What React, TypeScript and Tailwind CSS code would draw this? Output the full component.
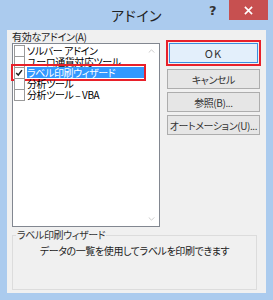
import React from "react";

const jp = "font-['Meiryo_UI','Noto_Sans_CJK_JP',sans-serif] [font-feature-settings:'palt']";

const items = [
  { label: "ソルバー アドイン", checked: false },
  { label: "ユーロ通貨対応ツール", checked: false },
  { label: "ラベル印刷ウィザード", checked: true, selected: true },
  { label: "分析ツール", checked: false },
  { label: "分析ツール – VBA", checked: false },
];

function Check({ on }: { on: boolean }) {
  return (
    <div className="relative w-[11px] h-[12px] shrink-0 border border-[#9a9a9a] bg-white">
      {on && (
        <svg viewBox="0 0 11 12" className="absolute inset-0 w-[9px] h-[10px]">
          <path d="M1.5 6 L4 8.5 L8.5 2.5" fill="none" stroke="#222" strokeWidth="1.8" />
        </svg>
      )}
    </div>
  );
}

function Button({ label, primary }: { label: string; primary?: boolean }) {
  return (
    <div
      className={
        "h-[20px] flex items-center justify-center whitespace-nowrap text-[10px] tracking-[-0.4px] text-[#333] border " +
        (primary
          ? "border-[#3c8ee0] bg-[#e3effb] text-[11px] tracking-[1px]"
          : "border-[#adadad] bg-[#e6e6e6]")
      }
    >
      {label}
    </div>
  );
}

export default function App() {
  return (
    <div className={"w-[273px] h-[300px] bg-[#abcbee] overflow-hidden text-black " + jp}>
      {/* title bar */}
      <div className="relative h-[30px] flex items-center justify-center">
        <span className="text-[14px] text-[#222] tracking-[0.5px]">アドイン</span>
        <span className="absolute left-[209px] top-[1px] text-[13px] font-bold text-[#333] font-['DejaVu_Sans',sans-serif]">?</span>
        <div className="absolute left-[229px] top-0 w-[39px] h-[20px] bg-[#c75050] flex items-center justify-center">
          <svg viewBox="0 0 10 10" className="w-[9px] h-[9px]">
            <path d="M1 1 L9 9 M9 1 L1 9" stroke="#fff" strokeWidth="1.8" />
          </svg>
        </div>
      </div>

      {/* client area */}
      <div className="mx-[7px] h-[263px] bg-[#f0f0f0] px-[5px] pt-[2px]">
        <div className="flex gap-[6px]">
          <div className="w-[149px]">
            <div className="h-[10px] text-[10px] leading-[10px] tracking-[-0.3px] text-[#222]">有効なアドイン(A)</div>
            <div className="mt-[1px] h-[184px] border border-[#828790] bg-white flex">
              <div className="flex-1 pt-[1px] pl-[1px]">
                {items.map((it) => (
                  <div key={it.label} className="relative h-[11px] flex items-center">
                    <Check on={it.checked} />
                    <div
                      className={
                        "ml-[2px] h-[11px] flex-1 flex items-center text-[10px] leading-[11px] tracking-[-0.4px] whitespace-nowrap " +
                        (it.selected ? "bg-[#3399ff] text-white" : "text-black")
                      }
                    >
                      {it.label}
                    </div>
                    {it.selected && (
                      <div className="absolute -left-[3px] -right-[2px] -top-[3px] -bottom-[3px] border-2 border-[#e8202a]" />
                    )}
                  </div>
                ))}
              </div>
              <div className="w-[15px] flex flex-col justify-between items-center py-[5px]">
                <svg viewBox="0 0 8 5" className="w-[7px] h-[4px]">
                  <path d="M0.5 4.5 L4 1 L7.5 4.5" fill="none" stroke="#c2c2c2" strokeWidth="1" />
                </svg>
                <svg viewBox="0 0 8 5" className="w-[7px] h-[4px]">
                  <path d="M0.5 0.5 L4 4 L7.5 0.5" fill="none" stroke="#c2c2c2" strokeWidth="1" />
                </svg>
              </div>
            </div>
          </div>

          <div className="w-[96px] mt-[8px] flex flex-col gap-[3px]">
            <div className="border-2 border-[#e8202a] p-[1px]">
              <Button label="OK" primary />
            </div>
            <div className="px-[1px] flex flex-col gap-[3px]">
              <Button label="キャンセル" />
              <Button label="参照(B)..." />
              <Button label="オートメーション(U)..." />
            </div>
          </div>
        </div>

        {/* description group */}
        <div className="relative mt-[8px] h-[55px] border border-[#dcdcdc] mr-[4px]">
          <span className="absolute left-[3px] -top-[7px] bg-[#f0f0f0] px-[1px] text-[10px] leading-[12px] tracking-[-0.4px] text-[#333]">
            ラベル印刷ウィザード
          </span>
          <div className="pt-[9px] text-center text-[10px] leading-[12px] tracking-[-0.4px] text-[#222]">
            データの一覧を使用してラベルを印刷できます
          </div>
        </div>
      </div>
    </div>
  );
}
